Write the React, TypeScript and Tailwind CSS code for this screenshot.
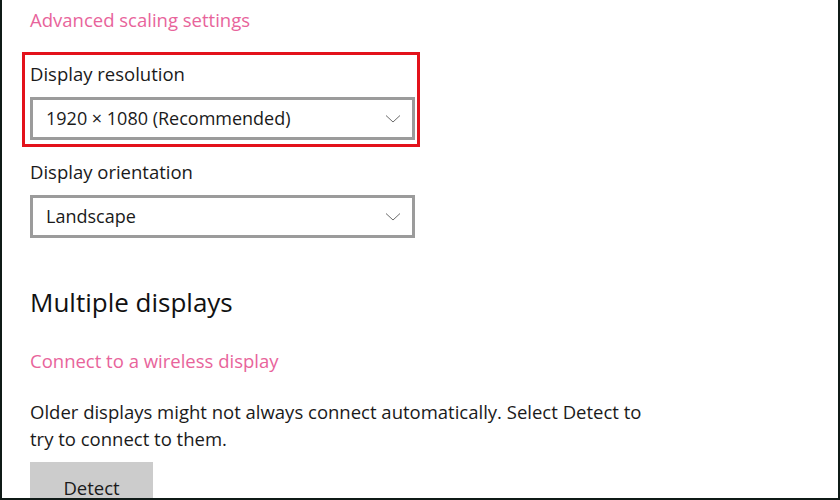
import React from "react";

function Chevron() {
  return (
    <svg width="16" height="10" viewBox="0 0 16 10" className="shrink-0">
      <path d="M1 1.5 L8 8 L15 1.5" fill="none" stroke="#6b6b6b" strokeWidth="1" />
    </svg>
  );
}

function Select({ value }: { value: string }) {
  return (
    <div className="flex h-[43px] w-[385px] items-center justify-between border-[3px] border-[#9b9b9b] bg-white pl-[13px] pr-[11px]">
      <span className="text-[18px] text-[#1a1a1a]">{value}</span>
      <Chevron />
    </div>
  );
}

export default function App() {
  return (
    <div
      className="relative h-[500px] w-[840px] overflow-hidden bg-white border-l-2 border-r-2 border-b-2 border-[#0f1a17]"
      style={{ fontFamily: '"Open Sans", "Noto Sans", sans-serif' }}
    >
      <div className="flex flex-col pl-[28px]">
        <div className="mt-[6px] text-[18.5px] leading-[28px] text-[#e8649b]">Advanced scaling settings</div>
        <div className="ml-[-8px] mt-[18px] w-[398px] border-[3px] border-[#e3121b] pl-[5px] pt-[6px] pb-[4px]">
          <div className="text-[18.5px] leading-[26px] text-[#1a1a1a]">Display resolution</div>
          <div className="mt-[10px]">
            <Select value="1920 × 1080 (Recommended)" />
          </div>
        </div>
        <div className="mt-[12px] text-[18.5px] leading-[26px] text-[#1a1a1a]">Display orientation</div>
        <div className="mt-[10px]">
          <Select value="Landscape" />
        </div>
        <div className="mt-[46px] text-[26px] leading-[36px] text-[#111]">Multiple displays</div>
        <div className="mt-[28px] text-[18.5px] leading-[26px] text-[#e8649b]">Connect to a wireless display</div>
        <div className="mt-[24px] w-[616px] text-[18.5px] leading-[27px] text-[#1a1a1a]">
          Older displays might not always connect automatically. Select Detect to try to connect to them.
        </div>
        <div className="mt-[10px] flex h-[40px] w-[123px] items-center justify-center bg-[#cccccc] pt-[12px] text-[18.5px] text-[#1a1a1a]">
          Detect
        </div>
      </div>
    </div>
  );
}
